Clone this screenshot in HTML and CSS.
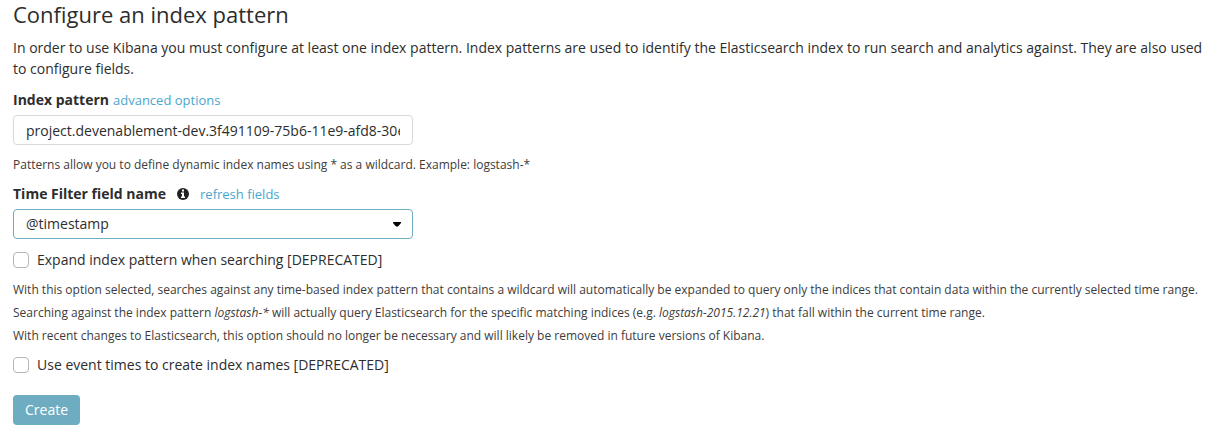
FILE: index.html
```html
<!DOCTYPE html>
<html lang="en">
<head>
<meta charset="utf-8">
<title>Configure an index pattern</title>
<link rel="stylesheet" href="styles.css">
</head>
<body>
<main class="page">
  <h1 class="title">Configure an index pattern</h1>
  <p class="intro">In order to use Kibana you must configure at least one index pattern. Index patterns are used to identify the Elasticsearch index to run search and analytics against. They are also used to configure fields.</p>
  <form class="form">
    <div class="label-row">
      <label class="label" for="pattern">Index pattern</label>
      <a class="link" href="#">advanced options</a>
    </div>
    <input class="control" id="pattern" type="text" value="project.devenablement-dev.3f491109-75b6-11e9-afd8-30e171">
    <p class="hint pattern-hint">Patterns allow you to define dynamic index names using * as a wildcard. Example: logstash-*</p>
    <div class="label-row">
      <label class="label" for="time">Time Filter field name</label>
      <svg class="info" viewBox="0 0 12 12" aria-hidden="true"><circle cx="6" cy="6" r="6"/><path d="M5 1.500h2v2H5zM4 4.500h3v4h1V10H4V8.500h1V6H4z"/></svg>
      <a class="link" href="#">refresh fields</a>
    </div>
    <div class="select-wrap">
      <select class="control select" id="time"><option>@timestamp</option></select>
      <svg class="caret" viewBox="0 0 8 5" aria-hidden="true"><path d="M0 0h8v1L5 4.500H3L0 1z"/></svg>
    </div>
    <label class="check"><input class="box" type="checkbox">Expand index pattern when searching [DEPRECATED]</label>
    <div class="details">
      <p class="hint">With this option selected, searches against any time-based index pattern that contains a wildcard will automatically be expanded to query only the indices that contain data within the currently selected time range.</p>
      <p class="hint">Searching against the index pattern <em>logstash-*</em> will actually query Elasticsearch for the specific matching indices (e.g. <em>logstash-2015.12.21</em>) that fall within the current time range.</p>
      <p class="hint">With recent changes to Elasticsearch, this option should no longer be necessary and will likely be removed in future versions of Kibana.</p>
    </div>
    <label class="check"><input class="box" type="checkbox">Use event times to create index names [DEPRECATED]</label>
    <button class="create" type="button">Create</button>
  </form>
</main>
</body>
</html>
```
FILE: styles.css
```css
* { box-sizing: border-box; }
body { margin: 0; background: #fff; color: #2d2d2d; font: 14px/20px "Open Sans", sans-serif; }
.page { padding: 2px 13px; }
.title { margin: 0 0 11px; font-size: 22px; font-weight: 400; line-height: 24px; }
.intro { margin: 0 0 11px; line-height: 21px; }
.form { display: flex; flex-direction: column; align-items: flex-start; }
.label-row { display: flex; align-items: center; gap: 4px; margin-bottom: 5px; }
.label { font-weight: 700; }
.link { color: #4ba6cc; font-size: 13px; text-decoration: none; }
.control { width: 400px; max-width: 100%; height: 30px; padding: 0 12px; border: 1px solid #d9d9d9; border-radius: 4px; background: #fff; color: #2d2d2d; font: inherit; }
.hint { margin: 0; color: #3c3c3c; font-size: 12px; line-height: 17px; }
.pattern-hint { margin: 11px 0; }
.info { width: 12px; height: 12px; margin: 0 7px; fill: #222; }
.info path { fill: #fff; }
.select-wrap { position: relative; width: 400px; max-width: 100%; height: 30px; }
.select { display: block; border-color: #6eadc1; appearance: none; }
.caret { position: absolute; top: 13px; right: 12px; width: 8px; height: 5px; fill: #000; pointer-events: none; }
.check { display: flex; align-items: center; gap: 8px; margin-top: 11px; }
.box { appearance: none; width: 16px; height: 16px; margin: 0; border: 1px solid #b5b5b5; border-radius: 4px; background: #fff; }
.box:checked { background: #6eadc1; }
.details { display: grid; gap: 6px; margin-top: 11px; }
.create { height: 30px; margin-top: 20px; padding: 0 12px; border: 0; border-radius: 4px; background: #6eadc1; color: #fff; font: inherit; }
```
